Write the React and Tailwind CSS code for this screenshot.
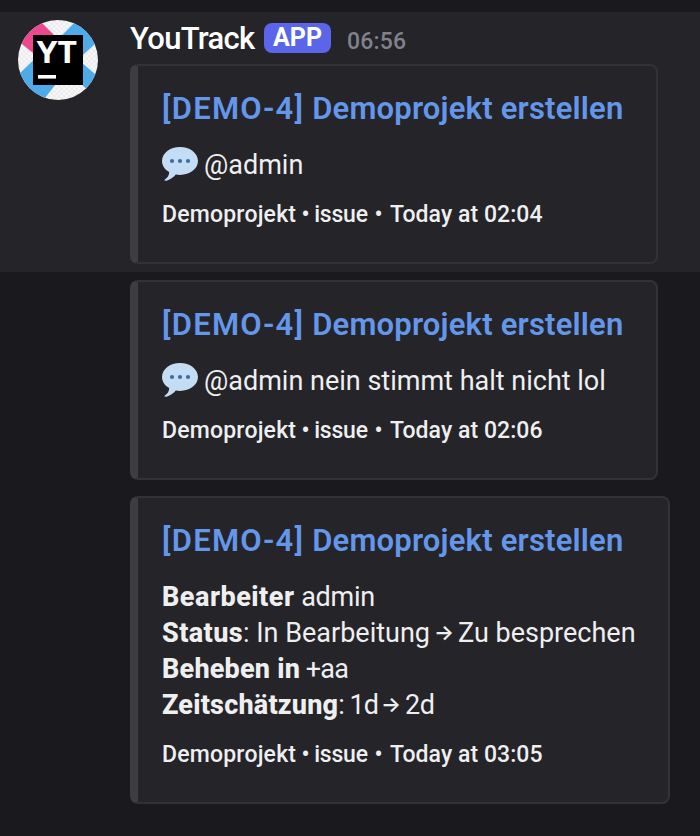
import React from 'react';

function Avatar() {
  return (
    <svg viewBox="0 0 80 80" className="size-20 shrink-0" role="img" aria-label="YouTrack">
      <defs>
        <pattern id="checker" width="5" height="5" patternUnits="userSpaceOnUse">
          <rect width="5" height="5" fill="#f8f8f8" />
          <rect width="2.5" height="2.5" fill="#ebebeb" />
          <rect x="2.5" y="2.5" width="2.5" height="2.5" fill="#ebebeb" />
        </pattern>
        <clipPath id="round">
          <circle cx="40" cy="40" r="40" />
        </clipPath>
      </defs>
      <g clipPath="url(#round)">
        <rect width="80" height="80" fill="url(#checker)" />
        <polygon points="20,-1 24.3,3.3 36,15 36,20 14.7,32.7 3,23.3 -2,20" fill="#ec4890" />
        <polygon points="60,-1 44.3,15 44.3,20 64.7,35.3 77,24 84,17" fill="#4dabea" />
        <polygon points="16,39.5 2,53 -4,59 0,82 24,82 37.5,64.5" fill="#4dabea" />
        <polygon points="64,42.7 77,54 84,60 80,80 64,64.7" fill="#4dabea" />
      </g>
      <rect x="15" y="15" width="50" height="50" fill="#000" />
      <text x="18.6" y="43.2" fontSize="30.5" fontWeight="700" fill="#fff" fontFamily="'Open Sans', sans-serif" textLength="40.5" lengthAdjust="spacingAndGlyphs">YT</text>
      <rect x="20" y="55" width="18" height="3.6" fill="#fff" />
    </svg>
  );
}

function SpeechBubble() {
  return (
    <svg viewBox="0 0 36 36" className="-mt-px mr-[6px] size-9 shrink-0" role="img" aria-label="💬">
      <path d="M18 1C8 1 0 7.2 0 15c0 4.7 2.8 8.500 7.200 11 .1 3.200-1.700 5.900-4.900 8 .3.9 1.700.9 3 .4 3.800-1.300 6.700-3.600 8.500-5.900 1.400.3 2.800.4 4.200.4 10 0 18-6.100 18-13.900S28 1 18 1z" fill="#c4dcf4" />
      <circle cx="10" cy="15" r="2.1" fill="#3f6f9f" />
      <circle cx="18" cy="15" r="2.1" fill="#3f6f9f" />
      <circle cx="26" cy="15" r="2.1" fill="#3f6f9f" />
    </svg>
  );
}

function Arrow({ className }) {
  return <span className={`${className} inline-block w-[18px] -translate-y-[2px] text-center font-[Inter] text-[21px] font-semibold leading-none`}>→</span>;
}

function Embed({ width, time, children }) {
  return (
    <article className={`${width} rounded-lg border-2 border-l-8 border-[#323237] border-l-[#3d3d42] bg-[#242429] pt-[25px] pb-[31px] pl-6`}>
      <h2 className="text-[31px] leading-9 font-semibold tracking-[0.2px] whitespace-nowrap text-[#6497ea]">
        <span className="tracking-[1.25px]">[DEMO-4]</span> Demoprojekt erstellen
      </h2>
      <div className="mt-5 text-[27px] leading-9 whitespace-nowrap">{children}</div>
      <footer className="mt-4 flex text-[23px] leading-8 font-medium whitespace-nowrap">
        <span className="w-[205px]"><span className="tracking-[0.2px]">Demoprojekt</span><span className="tracking-[-0.5px]"> • </span><span className="tracking-[-0.2px]">issue</span></span>
        <span className="w-[23px] text-center">•</span>
        <span className="tracking-[0.05px]">Today at {time}</span>
      </footer>
    </article>
  );
}

export default function App() {
  return (
    <main className="h-[836px] w-[700px] overflow-hidden bg-[#1a191e] pt-3 font-[Roboto,sans-serif] text-[#efeff0]">
      <section className="flex h-[260px] bg-[#242429] pt-2 pl-[18px]">
        <Avatar />
        <div className="ml-8">
          <header className="flex h-9 items-center">
            <span className="mt-[2px] w-[125px] text-[31px] leading-9 font-medium tracking-[-0.7px] text-white">YouTrack</span>
            <span className="ml-[9px] flex h-[30px] w-[67px] items-center justify-center rounded-lg bg-[#5b65ea] text-[25px] font-bold text-white">APP</span>
            <time className="mt-[7px] ml-4 text-[23px] leading-8 font-medium tracking-[0.2px] text-[#81828a]">06:56</time>
          </header>
          <div className="mt-2">
            <Embed width="w-[528px]" time="02:04">
              <p className="flex"><SpeechBubble />@admin</p>
            </Embed>
          </div>
        </div>
      </section>
      <section className="mt-2 ml-[130px] flex flex-col gap-4">
        <Embed width="w-[528px]" time="02:06">
          <p className="flex"><SpeechBubble />@admin nein stimmt halt nicht lol</p>
        </Embed>
        <Embed width="w-[540px]" time="03:05">
          <p><b className="font-extrabold tracking-[0.5px]">Bearbeiter</b> <span className="tracking-[-0.3px]">admin</span></p>
          <p><b className="font-extrabold tracking-[0.4px]">Status</b>: In Bearbeitung<Arrow className="mr-[6px] ml-[4px]" />Zu besprechen</p>
          <p><b className="font-extrabold tracking-[0.2px]">Beheben in</b> <span className="-ml-px tracking-[-0.8px]">+aa</span></p>
          <p><b className="font-extrabold tracking-[0.2px]">Zeitschätzung</b><span className="tracking-[-1px]">: 1d</span><Arrow className="mr-[6px] ml-[3px]" /><span className="tracking-[-0.3px]">2d</span></p>
        </Embed>
      </section>
    </main>
  );
}
